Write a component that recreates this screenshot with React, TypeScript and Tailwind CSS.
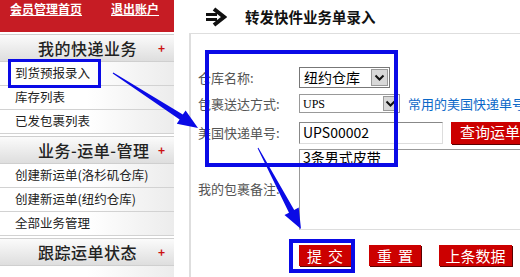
import React from "react";

/* ── Sidebar data ─────────────────────────────────────────── */

const SECTIONS = [
  { title: "我的快递业务", items: ["到货预报录入", "库存列表", "已发包裹列表"] },
  {
    title: "业务-运单-管理",
    items: ["创建新运单(洛杉矶仓库)", "创建新运单(纽约仓库)", "全部业务管理"],
  },
  { title: "跟踪运单状态", items: [""] },
];

const CJK = { fontFamily: '"Noto Sans CJK SC", "Liberation Sans", sans-serif' };

function Chevron() {
  return (
    <svg width="11" height="8" viewBox="0 0 11 8">
      <path d="M1.5 1.5 L5.5 5.5 L9.5 1.5" fill="none" stroke="#111" strokeWidth="2" />
    </svg>
  );
}

function Sidebar() {
  return (
    <div className="w-[174px] shrink-0 flex flex-col">
      <div className="h-[32px] shrink-0 bg-[#c61c24] flex items-start gap-[29px] pl-[10px] pt-[1px]">
        <span className="text-[12px] font-bold text-white underline leading-[16px]">会员管理首页</span>
        <span className="text-[12px] font-bold text-white underline leading-[16px]">退出账户</span>
      </div>
      {SECTIONS.map((s) => (
        <div key={s.title} className="flex flex-col shrink-0">
          <div className="mt-[2px] h-[28px] shrink-0 flex items-center pl-[38px] pr-[9px] border-y border-[#cfcfcf] bg-gradient-to-b from-[#fbfbfb] to-[#dedede]">
            <span className="flex-1 text-[16px] font-medium text-[#222] tracking-[0.5px]">{s.title}</span>
            <span className="text-[#cc1111] text-[12px] font-bold leading-none">+</span>
          </div>
          {s.items.map((it, i) => (
            <div
              key={i}
              className="h-[24px] shrink-0 flex items-center pl-[15px] text-[12.5px] text-[#222] border-b border-[#d2d2d2] bg-gradient-to-r from-white via-white to-[#ececec]"
            >
              {it}
            </div>
          ))}
        </div>
      ))}
    </div>
  );
}

function TitleArrow() {
  return (
    <svg width="22" height="20" viewBox="0 0 22 20">
      <path d="M9 2 L19 10 L9 18" fill="none" stroke="#111" strokeWidth="4" strokeLinejoin="miter" />
      <rect x="1" y="6" width="11" height="3" fill="#111" />
      <rect x="1" y="11" width="11" height="3" fill="#111" />
    </svg>
  );
}

function RedButton({ label, w, spaced }: { label: string; w: string; spaced?: boolean }) {
  return (
    <div
      className={`${w} h-[21px] bg-[#cc0000] text-white text-[15px] leading-none flex items-center justify-center shadow-[1px_1px_0_#5a0000] ${
        spaced ? "tracking-[6px] pl-[6px]" : ""
      }`}
    >
      {label}
    </div>
  );
}

function FormPanel() {
  return (
    <div className="flex-1 flex flex-col">
      <div className="h-[33px] shrink-0 flex items-center pl-[31px] gap-[18px]">
        <TitleArrow />
        <span className="text-[14.5px] font-bold text-[#111]">转发快件业务单录入</span>
      </div>
      <div className="ml-[15px] flex-1 border-l-2 border-t border-[#dedede] pl-[7px] pt-[33px] text-[13px] text-[#555]">
        <div className="grid grid-cols-[101px_1fr] items-center gap-y-0">
          {/* 仓库名称 */}
          <span>仓库名称:</span>
          <div className="w-[91px] h-[21px] border border-[#777] flex items-center bg-white">
            <span className="flex-1 pl-[4px] text-[14px] text-black">纽约仓库</span>
            <div className="w-[17px] h-[17px] mr-[1px] bg-[#d8d8d8] border border-[#999] flex items-center justify-center">
              <Chevron />
            </div>
          </div>

          {/* 包裹送达方式 */}
          <span className="mt-[6px]">包裹送达方式:</span>
          <div className="mt-[6px] flex items-center gap-[8px] whitespace-nowrap">
            <div className="w-[101px] h-[19px] shrink-0 border border-[#999] flex items-center bg-white">
              <span className="flex-1 pl-[3px] text-[12px] text-black" style={{ fontFamily: '"Liberation Serif", serif' }}>
                UPS
              </span>
              <div className="w-[15px] h-[15px] mr-[1px] bg-[#d8d8d8] border border-[#999] flex items-center justify-center">
                <Chevron />
              </div>
            </div>
            <span className="text-[#0b68c8] text-[13px]">常用的美国快递单号表</span>
          </div>

          {/* 美国快递单号 */}
          <span className="mt-[8px]">美国快递单号:</span>
          <div className="mt-[8px] flex items-center gap-[8px] whitespace-nowrap">
            <div className="w-[144px] h-[22px] shrink-0 border border-[#888] border-r-[#ddd] border-b-[#ddd] bg-white flex items-center pl-[3px] text-[14px] text-black">
              UPS00002
            </div>
            <div className="w-[80px] h-[22px] bg-[#cc0000] text-white text-[15px] flex items-center pl-[9px] shrink-0 shadow-[1px_1px_0_#5a0000]">
              查询运单
            </div>
          </div>

          {/* 备注 */}
          <span className="mt-[5px]">我的包裹备注:</span>
          <div className="mt-[5px] w-[240px] h-[81px] border border-[#999] border-r-[#ddd] border-b-[#ddd] bg-white pl-[3px] text-[14px] leading-[14px] text-black">
            3条男式皮带
          </div>

          {/* buttons */}
          <span />
          <div className="mt-[15px] flex items-center gap-[18px]">
            <RedButton label="提交" w="w-[52px]" spaced />
            <RedButton label="重置" w="w-[52px]" spaced />
            <RedButton label="上条数据" w="w-[73px]" />
          </div>
        </div>
      </div>
    </div>
  );
}

export default function App() {
  return (
    <div className="relative w-[520px] h-[277px] overflow-hidden bg-white flex" style={CJK}>
      <Sidebar />
      <FormPanel />

      {/* annotation overlay */}
      <div className="absolute left-[8px] top-[59px] w-[93px] h-[29px] border-[3px] border-[#0a0ae6]" />
      <div className="absolute left-[205px] top-[50px] w-[193px] h-[117px] border-[4px] border-[#0a0ae6]" />
      <div className="absolute left-[289px] top-[239px] w-[66px] h-[34px] border-[4px] border-[#0a0ae6]" />
      <svg className="absolute left-0 top-0 pointer-events-none" width="520" height="277">
        <polygon
          points="112.7,73.4 179.6,119.6 176.8,123.8 198,128 185.6,110.4 182.8,114.6 113.3,72.6"
          fill="#0a0ae6"
        />
        <polygon
          points="257.6,148.2 289,212.7 284.5,215.1 301,229 298.7,207.5 294.2,209.9 258.4,147.8"
          fill="#0a0ae6"
        />
      </svg>
    </div>
  );
}
